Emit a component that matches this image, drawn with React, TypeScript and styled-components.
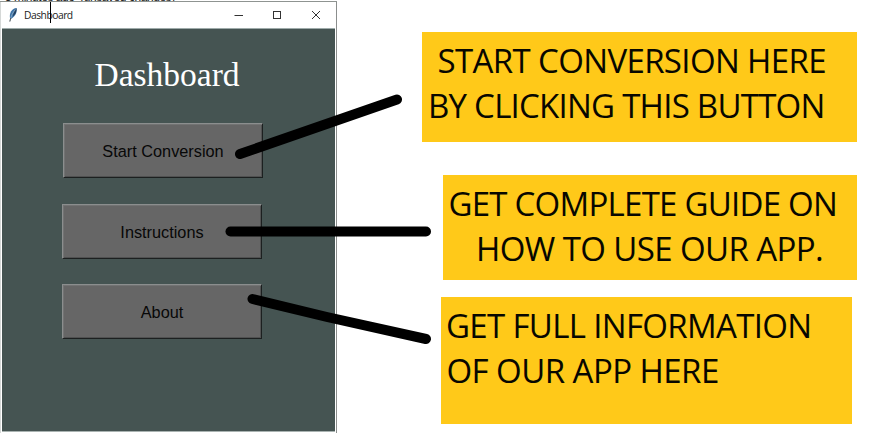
import React from 'react';
import styled, { createGlobalStyle } from 'styled-components';

const GlobalStyle = createGlobalStyle`
  * { box-sizing: border-box; }
  body { margin: 0; background: #fff; }
`;

const Page = styled.main`
  position: relative;
  display: flex;
  width: 876px;
  height: 434px;
  overflow: hidden;
  background: #fff;
`;

const LeftColumn = styled.section`
  display: flex;
  flex-direction: column;
  width: 337px;
  height: 433px;
`;

const Status = styled.div`
  height: 2px;
  flex: none;
  overflow: hidden;
  padding-left: 5px;
  border-bottom: 1px solid #8f9491;
  white-space: pre;
  font: 12px/14px 'Liberation Sans', sans-serif;
  letter-spacing: -0.45px;
  color: #222;

  span {
    display: block;
    margin-top: -10px;
  }
`;

const Window = styled.div`
  display: flex;
  flex: 1;
  flex-direction: column;
  border-right: 1px solid #8b8e8d;
  border-left: 1px solid #d5d8d7;
  background: #fff;
`;

const TitleBar = styled.header`
  position: relative;
  display: flex;
  align-items: center;
  height: 26px;
  padding: 0 14px 1px 7px;
`;

const WindowTitle = styled.span`
  flex: 1;
  margin-left: 6px;
  font: 10.3px/14px 'Open Sans', sans-serif;
  letter-spacing: -0.5px;
  color: #222;
`;

const TextCursor = styled.i`
  position: absolute;
  left: 49px;
  top: 0;
  width: 1px;
  height: 21px;
  background: #000;
`;

const Controls = styled.div`
  display: flex;
  gap: 28px;
`;

const Body = styled.div`
  display: flex;
  flex: 1;
  flex-direction: column;
  margin: 0 1px 1px;
  padding: 27px 0 0 60px;
  border-top: 1px solid #9eabaa;
  border-bottom: 1px solid #a9b3b1;
  background: #455452;
`;

const Heading = styled.h1`
  width: 210px;
  margin: 0 0 29px;
  text-align: center;
  font: 400 33.5px/38px 'Liberation Serif', serif;
  color: #fff;
`;

const ButtonList = styled.div`
  display: flex;
  flex-direction: column;
  gap: 25.5px;
`;

const MenuButton = styled.button<{ $shift?: number }>`
  width: 200px;
  height: 55px;
  margin: 0 0 0 ${(p) => p.$shift ?? 0}px;
  padding: 1px 0 0;
  border: 1px solid;
  border-color: #8b8e8e #1c2020 #1c2020 #8b8e8e;
  background: #666;
  box-shadow: inset 1px 1px #727373, inset -1px -1px #505151;
  font: 16.3px/20px 'Liberation Sans', sans-serif;
  color: #080808;
`;

const Notes = styled.section`
  display: flex;
  flex-direction: column;
  padding: 32px 0 0 85px;
`;

const Note = styled.article<{ $w: number; $h: number; $left?: number; $gap?: number; $top: number }>`
  width: ${(p) => p.$w}px;
  height: ${(p) => p.$h}px;
  margin: ${(p) => p.$gap ?? 0}px 0 0 ${(p) => p.$left ?? 0}px;
  padding-top: ${(p) => p.$top}px;
  background: #ffc919;
`;

const Line = styled.div<{ $indent: number; $tracking?: number }>`
  padding-left: ${(p) => p.$indent}px;
  white-space: nowrap;
  font: 33px/44.6px 'Open Sans', 'Noto Sans', sans-serif;
  letter-spacing: ${(p) => p.$tracking ?? 0}px;
  color: #080700;
`;

const Pointers = styled.svg`
  position: absolute;
  inset: 0;
  pointer-events: none;
`;

const Feather = () => (
  <svg width="10" height="16" viewBox="0 0 10 16">
    <path d="M2 11C1 6 4 1.5 8.5 1c.8 4-.8 8-5.5 11z" fill="#3e74a8" />
    <path d="M4.8 9.5C7.5 7.5 9 4 8.5 1 6.5 4 5.5 6 4.8 9.5z" fill="#243e5b" />
    <path d="M7.5 2.5C4.5 5.5 3 9 2 14.5" fill="none" stroke="#9db7cc" strokeWidth=".7" />
    <path d="M2.7 11 1.8 14.5" stroke="#444" strokeWidth=".9" />
  </svg>
);

export default function App() {
  return (
    <>
      <GlobalStyle />
      <Page>
        <LeftColumn>
          <Status><span>3 minutes ago  (unsaved changes)</span></Status>
          <Window>
            <TitleBar>
              <Feather />
              <WindowTitle>Dashboard</WindowTitle>
              <TextCursor />
              <Controls>
                <svg width="10" height="10"><path d="M.5 5.500h8.500" stroke="#333" /></svg>
                <svg width="10" height="10"><rect x="1.500" y="1.500" width="7" height="7" fill="none" stroke="#333" /></svg>
                <svg width="12" height="10"><path d="m2 1 8 8M10 1 2 9" stroke="#333" /></svg>
              </Controls>
            </TitleBar>
            <Body>
              <Heading>Dashboard</Heading>
              <ButtonList>
                <MenuButton $shift={1}>Start Conversion</MenuButton>
                <MenuButton>Instructions</MenuButton>
                <MenuButton>About</MenuButton>
              </ButtonList>
            </Body>
          </Window>
        </LeftColumn>
        <Notes>
          <Note $w={435} $h={110} $top={7}>
            <Line $indent={15.5} $tracking={-0.63}>START CONVERSION HERE</Line>
            <Line $indent={6} $tracking={-0.75}>BY CLICKING THIS BUTTON</Line>
          </Note>
          <Note $w={414} $h={105} $left={21} $gap={33} $top={7}>
            <Line $indent={5.5} $tracking={-0.75}>GET COMPLETE GUIDE ON</Line>
            <Line $indent={33} $tracking={-0.6}>HOW TO USE OUR APP.</Line>
          </Note>
          <Note $w={411} $h={127} $left={19} $gap={17} $top={7}>
            <Line $indent={5} $tracking={-0.67}>GET FULL INFORMATION</Line>
            <Line $indent={5.5} $tracking={-0.55}>OF OUR APP HERE</Line>
          </Note>
        </Notes>
        <Pointers width="876" height="434" fill="none" stroke="#000" strokeWidth="10" strokeLinecap="round">
          <path d="M240 154 397 99.500" />
          <path d="M230.500 231.500H426" />
          <path d="M252.500 299 327 317 426 339" />
        </Pointers>
      </Page>
    </>
  );
}
